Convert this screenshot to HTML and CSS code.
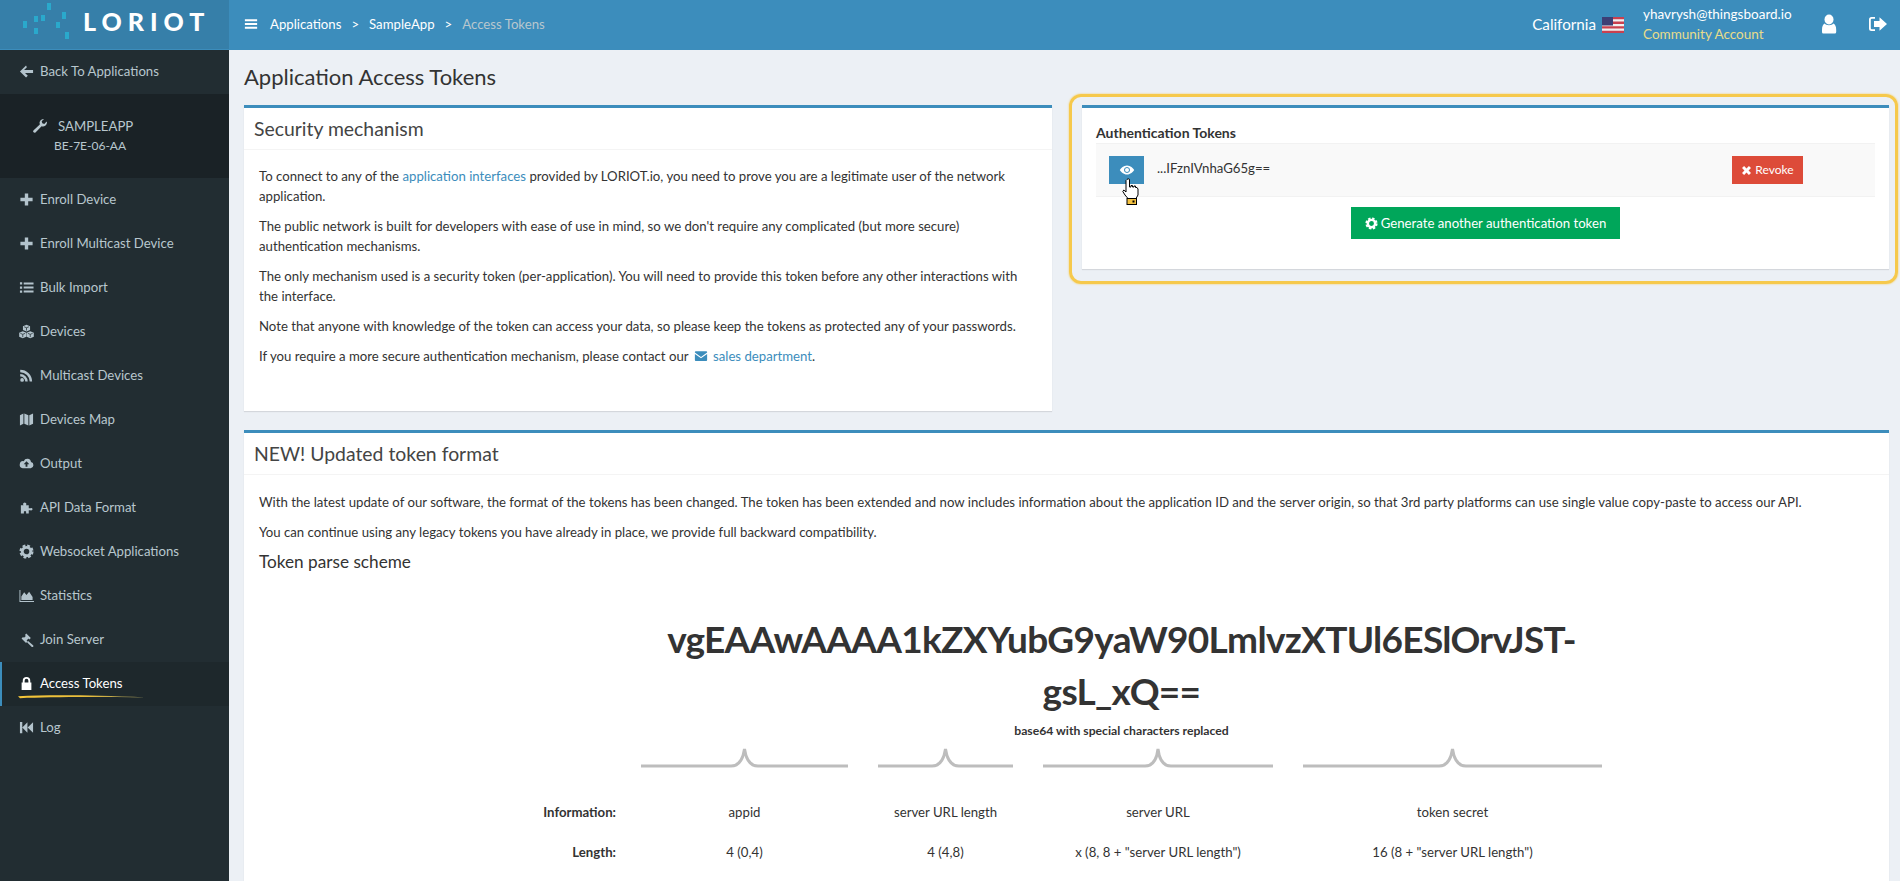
FILE: index.html
```html
<!DOCTYPE html>
<html lang="en">
<head>
  <meta charset="UTF-8" />
  <meta name="viewport" content="width=device-width, initial-scale=1.0" />
  <title>Application Access Tokens</title>
  <link rel="icon" href="data:,">
  <link rel="stylesheet" href="styles.css">
</head>
<body>
  <!-- Icon sheet -->
  <svg class="icon-sheet" width="0" height="0">
    <symbol id="i-back" viewBox="0 0 16 16"><path d="M7.500 1.500 1 8l6.500 6.500 1.900-1.900-3-3H15V6.400H5.400l3-3z"/></symbol>
    <symbol id="i-plus" viewBox="0 0 16 16"><path d="M6.200 1.500h3.600v4.700h4.700v3.600H9.800v4.700H6.200V9.800H1.500V6.200h4.700z"/></symbol>
    <symbol id="i-list" viewBox="0 0 16 16"><path d="M1 2.500h2.400v2.400H1zM5 2.600h10.500v2.200H5zM1 6.800h2.400v2.400H1zM5 6.900h10.500v2.200H5zM1 11.100h2.400v2.400H1zM5 11.200h10.500v2.200H5z"/></symbol>
    <symbol id="i-cubes" viewBox="0 0 16 16"><path d="M8 .8l3.800 1.500v4.200L8 8 4.200 6.500V2.300zM4 7.800l3.800 1.500v4.200L4 15.200.2 13.500V9.300zM12 7.800l3.800 1.500v4.200L12 15.200l-3.800-1.700V9.300z"/><path d="M5.500 3 8 4l2.500-1M8 4v3M1.500 10 4 11l2.500-1M4 11v3M9.500 10l2.500 1 2.500-1M12 11v3" fill="none" stroke="#222d32" stroke-width=".8"/></symbol>
    <symbol id="i-rss" viewBox="0 0 16 16"><circle cx="3.300" cy="12.700" r="2"/><path d="M1.300 6.500v2.600a5.400 5.400 0 0 1 5.400 5.400h2.600a8 8 0 0 0-8-8zM1.300 1.800v2.600a10.100 10.100 0 0 1 10.100 10.100H14A12.700 12.700 0 0 0 1.300 1.800z"/></symbol>
    <symbol id="i-map" viewBox="0 0 16 16"><path d="M1 3.500l3.700-2v11L1 14.500zM5.700 1.500l4.300 2v11l-4.300-2zM11 3.500l4-2v11l-4 2z"/></symbol>
    <symbol id="i-cloud" viewBox="0 0 16 16"><path fill-rule="evenodd" d="M12.800 6.500a4 4 0 0 0-7.700-1A3.600 3.600 0 0 0 4 13h8.500a3.300 3.300 0 0 0 .3-6.500zM8 5.700 5 8.700h2v2.800h2V8.700h2z"/></symbol>
    <symbol id="i-puzzle" viewBox="0 0 16 16"><path d="M2 5.500h2.800a1.700 1.700 0 1 1 2.600 0h3v3.300h1.800a1.300 1.300 0 1 1 0 2H10.400v3.700H7.600v-2a1.300 1.300 0 0 0-2.400 0v2H2z"/></symbol>
    <symbol id="i-cog" viewBox="0 0 16 16"><circle cx="8" cy="8" r="4.500" fill="none" stroke="currentColor" stroke-width="3"/><circle cx="8" cy="8" r="6.300" fill="none" stroke="currentColor" stroke-width="2.400" stroke-dasharray="2.950 2"/></symbol>
    <symbol id="i-area" viewBox="0 0 16 16"><path d="M.5 2h1v11.800H16V15H.5z"/><path d="M2.500 12.800V9l3-4.500 2.500 3L10.800 4l3.700 5.500v3.300z"/></symbol>
    <symbol id="i-gavel" viewBox="0 0 16 16"><path d="M7.800 1.500l4.800 4.800-1.600 1.600-.9-.9-2 2 1 1-1.600 1.600L2.700 6.800 4.300 5.200l1 1 2-2-1-1zM9.700 9.700l5.300 4.300a1 1 0 0 1-1.600 1.600L8.600 10.800z"/></symbol>
    <symbol id="i-lock" viewBox="0 0 16 16"><path fill-rule="evenodd" d="M4 7V5a4 4 0 0 1 8 0v2h1.200v8H2.800V7zM6 7h4V5a2 2 0 0 0-4 0z"/></symbol>
    <symbol id="i-rewind" viewBox="0 0 16 16"><path d="M1 2h2.500v12H1zM3.500 8 9 2.500v11zM9.200 8l5.800-5.500v11z"/></symbol>
    <symbol id="i-wrench" viewBox="0 0 16 16"><path d="M15 4.500a4 4 0 0 1-5.400 3.700l-6.100 6.300a1.500 1.500 0 0 1-2.100-2.100l6.400-6A4 4 0 0 1 12 1L9.700 3.300l.6 2 2 .6 2.300-2.300z"/></symbol>
    <symbol id="i-bars" viewBox="0 0 16 16"><path d="M1 2.500h14v2.400H1zM1 6.800h14v2.400H1zM1 11.100h14v2.400H1z"/></symbol>
    <symbol id="i-user" viewBox="0 0 16 20"><ellipse cx="8" cy="5.500" rx="4.500" ry="5"/><path d="M3.800 9.500c1 2.200 7.400 2.200 8.400 0 2 .5 3 3 3 6.500V18a1.500 1.500 0 0 1-1.500 1.500h-11A1.500 1.500 0 0 1 1 18v-2c0-3.500 1-6 2.800-6.500z"/></symbol>
    <symbol id="i-signout" viewBox="0 0 20 16"><path d="M7 1H3.500A2.500 2.500 0 0 0 1 3.500v9A2.500 2.500 0 0 0 3.500 15H7v-1.700H3.800a1 1 0 0 1-1-1V3.700a1 1 0 0 1 1-1H7z"/><path d="M11.500 1.200 19 8l-7.500 6.800V11H6V5h5.500z"/></symbol>
    <symbol id="i-mail" viewBox="0 0 16 16"><path d="M1 3.500A1 1 0 0 1 2 2.500h12a1 1 0 0 1 1 1v.6L8 9 1 4.100zM1 5.600l7 4.900 7-4.900v7a1 1 0 0 1-1 1H2a1 1 0 0 1-1-1z"/></symbol>
    <symbol id="i-eye" viewBox="0 0 16 16"><path fill-rule="evenodd" d="M8 3.500C4.500 3.500 2 6 .8 8c1.200 2 3.700 4.500 7.200 4.500S14 10 15.200 8C14 6 11.500 3.500 8 3.500zM8 5a3 3 0 1 0 .01 0z"/><circle cx="8" cy="8" r="2"/></symbol>
    <symbol id="i-times" viewBox="0 0 16 16"><path d="M1.500 4.500l3-3L8 5l3.500-3.500 3 3L11 8l3.500 3.500-3 3L8 11l-3.500 3.500-3-3L5 8z"/></symbol>
  </svg>

  <header class="topbar">
    <div class="logo">
      <svg class="logo-dots" width="50" height="42" viewBox="0 0 50 42">
        <path d="M0 21h4v7H0zM11 16h4v6h-4zM11 28h4v6h-4zM18 15h4v6h-4zM24 3h4v7h-4zM33 22h4v6h-4zM39 12h4v7h-4zM42 32h4v7h-4z"/>
      </svg>
      <span class="logo-text">LORIOT</span>
    </div>
    <nav class="navbar">
      <svg class="ic nav-toggle"><use href="#i-bars"/></svg>
      <a class="crumb">Applications</a>
      <span class="crumb-sep">&gt;</span>
      <a class="crumb">SampleApp</a>
      <span class="crumb-sep">&gt;</span>
      <span class="crumb crumb-current">Access Tokens</span>
      <div class="nav-right">
        <span class="region">California</span>
        <svg class="flag" width="22" height="16" viewBox="0 0 22 16">
          <rect width="22" height="16" fill="#f1f1f1"/>
          <path d="M0 0h22v2.300H0zM0 4.600h22v2.300H0zM0 9.200h22v2.300H0zM0 13.700h22V16H0z" fill="#c9404f"/>
          <rect width="11" height="8.500" fill="#3d3f75"/>
        </svg>
        <div class="account">
          <span>yhavrysh@thingsboard.io</span>
          <span class="account-type">Community Account</span>
        </div>
        <svg class="ic nav-user"><use href="#i-user"/></svg>
        <svg class="ic nav-out"><use href="#i-signout"/></svg>
      </div>
    </nav>
  </header>

  <div class="page">
    <aside class="sidebar">
      <a class="side-link"><svg class="ic"><use href="#i-back"/></svg>Back To Applications</a>
      <div class="app-info">
        <div class="app-name"><svg class="ic"><use href="#i-wrench"/></svg>SAMPLEAPP</div>
        <div class="app-eui">BE-7E-06-AA</div>
      </div>
      <a class="side-link"><svg class="ic"><use href="#i-plus"/></svg>Enroll Device</a>
      <a class="side-link"><svg class="ic"><use href="#i-plus"/></svg>Enroll Multicast Device</a>
      <a class="side-link"><svg class="ic"><use href="#i-list"/></svg>Bulk Import</a>
      <a class="side-link"><svg class="ic"><use href="#i-cubes"/></svg>Devices</a>
      <a class="side-link"><svg class="ic"><use href="#i-rss"/></svg>Multicast Devices</a>
      <a class="side-link"><svg class="ic"><use href="#i-map"/></svg>Devices Map</a>
      <a class="side-link"><svg class="ic"><use href="#i-cloud"/></svg>Output</a>
      <a class="side-link"><svg class="ic"><use href="#i-puzzle"/></svg>API Data Format</a>
      <a class="side-link"><svg class="ic"><use href="#i-cog"/></svg>Websocket Applications</a>
      <a class="side-link"><svg class="ic"><use href="#i-area"/></svg>Statistics</a>
      <a class="side-link"><svg class="ic"><use href="#i-gavel"/></svg>Join Server</a>
      <a class="side-link active"><svg class="ic"><use href="#i-lock"/></svg>Access Tokens
        <svg class="scribble" width="128" height="5" viewBox="0 0 128 5"><defs><linearGradient id="fade"><stop offset="0" stop-color="#f6c638"/><stop offset=".55" stop-color="#e8bd3c"/><stop offset="1" stop-color="#8b8a5a"/></linearGradient></defs><path d="M0 2.200C30 .8 70 .8 128 3.400 70 2.800 30 3 2 4.200z" fill="url(#fade)"/></svg>
      </a>
      <a class="side-link"><svg class="ic"><use href="#i-rewind"/></svg>Log</a>
    </aside>

    <main class="content">
      <h1 class="page-title">Application Access Tokens</h1>

      <div class="top-row">
        <section class="box box-security">
          <h3 class="box-title">Security mechanism</h3>
          <div class="box-body">
            <p>To connect to any of the <a>application interfaces</a> provided by LORIOT.io, you need to prove you are a legitimate user of the network application.</p>
            <p>The public network is built for developers with ease of use in mind, so we don't require any complicated (but more secure) authentication mechanisms.</p>
            <p>The only mechanism used is a security token (per-application). You will need to provide this token before any other interactions with the interface.</p>
            <p>Note that anyone with knowledge of the token can access your data, so please keep the tokens as protected any of your passwords.</p>
            <p>If you require a more secure authentication mechanism, please contact our <svg class="ic mail"><use href="#i-mail"/></svg> <a>sales department</a>.</p>
          </div>
        </section>

        <section class="box box-tokens">
          <h4 class="tokens-title">Authentication Tokens</h4>
          <div class="token-row">
            <button class="btn btn-eye"><svg class="ic"><use href="#i-eye"/></svg></button>
            <span class="token-value">...IFznIVnhaG65g==</span>
            <button class="btn btn-revoke"><svg class="ic"><use href="#i-times"/></svg>Revoke</button>
          </div>
          <div class="token-actions">
            <button class="btn btn-generate"><svg class="ic"><use href="#i-cog"/></svg>Generate another authentication token</button>
          </div>
          <svg class="cursor" width="17" height="27" viewBox="0 0 17 27">
            <path d="M5 1.500c1-1 2.500-1 2.500.5v7h1.500V7.500h1.500V9H12V8h1.500v1.500H15l1 1.500v6l-2 3.500H6L3 17 .8 13.500l1-1.500 2.200 2V2.500z" fill="#fff" stroke="#000" stroke-width="1"/>
            <rect x="5" y="20.500" width="9.500" height="6" fill="#f4c242" stroke="#000"/>
            <rect x="10.500" y="22.500" width="2" height="2"/>
          </svg>
        </section>
      </div>

      <section class="box box-format">
        <h3 class="box-title">NEW! Updated token format</h3>
        <div class="box-body">
          <p>With the latest update of our software, the format of the tokens has been changed. The token has been extended and now includes information about the application ID and the server origin, so that 3rd party platforms can use single value copy-paste to access our API.</p>
          <p>You can continue using any legacy tokens you have already in place, we provide full backward compatibility.</p>
          <h4 class="scheme-title">Token parse scheme</h4>
          <div class="scheme">
            <div class="scheme-token">
              <div class="token-big">vgEAAwAAAA1kZXYubG9yaW90LmlvzXTUl6ESlOrvJST-<br>gsL_xQ==</div>
              <div class="token-note">base64 with special characters replaced</div>
            </div>

            <div class="scheme-spacer"></div>
            <svg class="brace" width="207" height="26" viewBox="0 0 207 26"><path d="M0 21H90Q101 21 103.500 4 106 21 117 21H207"/></svg>
            <svg class="brace" width="135" height="26" viewBox="0 0 135 26"><path d="M0 21H54Q65 21 67.500 4 70 21 81 21H135"/></svg>
            <svg class="brace" width="230" height="26" viewBox="0 0 230 26"><path d="M0 21H102Q113 21 115 4 117 21 128 21H230"/></svg>
            <svg class="brace" width="299" height="26" viewBox="0 0 299 26"><path d="M0 21H136Q147 21 149.500 4 152 21 163 21H299"/></svg>

            <div class="scheme-label row-info">Information:</div>
            <div class="scheme-cell row-info">appid</div>
            <div class="scheme-cell row-info">server URL length</div>
            <div class="scheme-cell row-info">server URL</div>
            <div class="scheme-cell row-info">token secret</div>

            <div class="scheme-label">Length:</div>
            <div class="scheme-cell">4 (0,4)</div>
            <div class="scheme-cell">4 (4,8)</div>
            <div class="scheme-cell">x (8, 8 + "server URL length")</div>
            <div class="scheme-cell">16 (8 + "server URL length")</div>
          </div>
        </div>
      </section>
    </main>
  </div>
</body>
</html>
```

FILE: styles.css
```css
* {
  box-sizing: border-box;
}

html, body {
  height: 100%;
}

body {
  margin: 0;
  overflow: hidden;
  font-family: "Lato", "Noto Sans", sans-serif;
  font-size: 13.2px;
  line-height: 20px;
  color: #333;
  background: #ecf0f5;
}

a {
  color: #3c8dbc;
  text-decoration: none;
}

.icon-sheet {
  position: absolute;
}

.ic {
  width: 16px;
  height: 16px;
  fill: currentColor;
  flex: none;
}

/* Top bar */
.topbar {
  display: flex;
  height: 50px;
  background: #3c8dbc;
  color: #fff;
}

.logo {
  display: flex;
  align-items: flex-start;
  width: 229px;
  height: 49px;
  padding-left: 23px;
  background: #367fa9;
}

.logo-dots {
  fill: #2aa9cc;
  flex: none;
}

.logo-text {
  margin: 9px 0 0 10px;
  font-size: 25px;
  line-height: 24px;
  font-weight: 900;
  letter-spacing: 6px;
  white-space: nowrap;
}

.navbar {
  flex: 1;
  display: flex;
  align-items: center;
  padding: 0 0 2px 15px;
}

.nav-toggle {
  width: 14px;
  margin-right: 12px;
}

.crumb {
  color: #fff;
}

.crumb-sep {
  margin: 0 10px;
}

.crumb-current {
  color: #b8c7ce;
}

.nav-right {
  margin-left: auto;
  display: flex;
  align-items: center;
}

.region {
  font-size: 15.2px;
}

.flag {
  margin: 2px 19px 0 6px;
}

.account {
  display: flex;
  flex-direction: column;
  width: 178px;
  font-size: 13.5px;
  line-height: 20px;
}

.account-type {
  color: #e8dc8a;
}

.nav-user {
  width: 16px;
  height: 20px;
}

.nav-out {
  width: 20px;
  height: 16px;
  margin: 0 12px 0 31px;
}

/* Sidebar */
.page {
  display: flex;
  height: calc(100% - 50px);
}

.sidebar {
  width: 229px;
  flex: none;
  background: #222d32;
  color: #b8c7ce;
}

.side-link {
  position: relative;
  display: flex;
  align-items: center;
  gap: 6px;
  height: 44px;
  padding: 0 0 2px 19px;
  color: #b8c7ce;
}

.side-link .ic {
  color: #b3c3cc;
  width: 15px;
  height: 15px;
}

.side-link.active {
  background: #1e282c;
  border-left: 2px solid #3c8dbc;
  padding-left: 17px;
  color: #fff;
}

.side-link.active .ic {
  color: #fff;
}

.scribble {
  position: absolute;
  left: 16px;
  top: 32px;
}

.app-info {
  height: 84px;
  padding: 22px 0 0 32px;
  background: #1a2226;
}

.app-name {
  display: flex;
  align-items: center;
  gap: 10px;
}

.app-eui {
  margin: 0 0 0 22px;
  font-size: 12px;
}

/* Content */
.content {
  flex: 1;
  min-width: 0;
  padding: 0 11px 0 15px;
}

.page-title {
  margin: 0;
  padding-top: 12px;
  height: 55px;
  font-size: 22px;
  line-height: 30px;
  font-weight: 400;
  color: #333;
}

.top-row {
  display: flex;
  gap: 30px;
  align-items: flex-start;
  margin-bottom: 19px;
}

.box {
  background: #fff;
  border-top: 3px solid #3c8dbc;
  box-shadow: 0 1px 1px rgba(0, 0, 0, 0.1);
}

.box-title {
  margin: 0;
  height: 42px;
  padding: 9px 10px 0;
  font-size: 19.4px;
  line-height: 24px;
  font-weight: 400;
  color: #444;
  border-bottom: 1px solid #f4f4f4;
}

.box-body {
  padding: 16px 15px 0;
}

.box-body p {
  margin: 0 0 10px;
}

.box-security {
  width: 808px;
  height: 306px;
}

.mail {
  width: 14px;
  height: 14px;
  margin: 0 2px;
  vertical-align: -2px;
  color: #3c8dbc;
}

/* Token box */
.box-tokens {
  position: relative;
  flex: 1;
  height: 164px;
  padding: 15px 14px 0;
}

.box-tokens::before {
  content: "";
  position: absolute;
  inset: -14px -9px -15px -13px;
  border: 3px solid #f6c94c;
  border-radius: 12px;
  box-shadow: 0 0 2px #f6c94c;
  pointer-events: none;
}

.tokens-title {
  margin: 0;
  height: 20px;
  font-size: 14px;
  line-height: 20px;
  font-weight: 700;
}

.token-row {
  display: flex;
  align-items: center;
  height: 54px;
  padding: 0 72px 0 13px;
  background: #f9f9f9;
  border-top: 1px solid #f2f2f2;
  border-bottom: 1px solid #f2f2f2;
}

.token-value {
  margin: -4px auto 0 13px;
}

.btn {
  display: inline-flex;
  align-items: center;
  justify-content: center;
  border: 0;
  color: #fff;
  font: inherit;
  padding: 0;
}

.btn-eye {
  width: 35px;
  height: 28px;
  background: #3c8dbc;
}

.btn-revoke {
  gap: 3px;
  width: 71px;
  height: 28px;
  background: #dd4b39;
  font-size: 12px;
}

.btn-revoke .ic {
  width: 11px;
  height: 11px;
}

.token-actions {
  display: flex;
  justify-content: center;
  margin-top: 10px;
}

.btn-generate {
  gap: 3px;
  width: 269px;
  height: 32px;
  background: #00a65a;
}

.btn-generate .ic {
  width: 13px;
  height: 13px;
}

.cursor {
  position: absolute;
  left: 40px;
  top: 70px;
}

/* Token format box */
.box-format {
  height: 500px;
}

.box-format .box-body {
  padding-top: 17px;
}

.scheme-title {
  margin: 10px 0 0;
  font-size: 17.2px;
  line-height: 20px;
  font-weight: 400;
}

.scheme {
  display: grid;
  grid-template-columns: 150px 207px 135px 230px 299px;
  column-gap: 30px;
  margin: 41px 0 0 202px;
}

.scheme-token {
  grid-column: 2 / -1;
  text-align: center;
}

.token-big {
  font-size: 37px;
  line-height: 52px;
  font-weight: 700;
  letter-spacing: -0.7px;
  color: #333;
  white-space: nowrap;
}

.token-note {
  margin-top: 7px;
  font-size: 12.2px;
  line-height: 14px;
  font-weight: 700;
}

.brace {
  margin-top: 7px;
  fill: none;
  stroke: #bdbdbd;
  stroke-width: 3px;
}

.scheme-label {
  text-align: right;
  font-weight: 700;
  margin-right: -5px;
  padding-top: 2px;
  height: 40px;
}

.scheme-cell {
  text-align: center;
  padding-top: 2px;
  height: 40px;
}

.row-info {
  padding-top: 31px;
  height: 69px;
}
```
